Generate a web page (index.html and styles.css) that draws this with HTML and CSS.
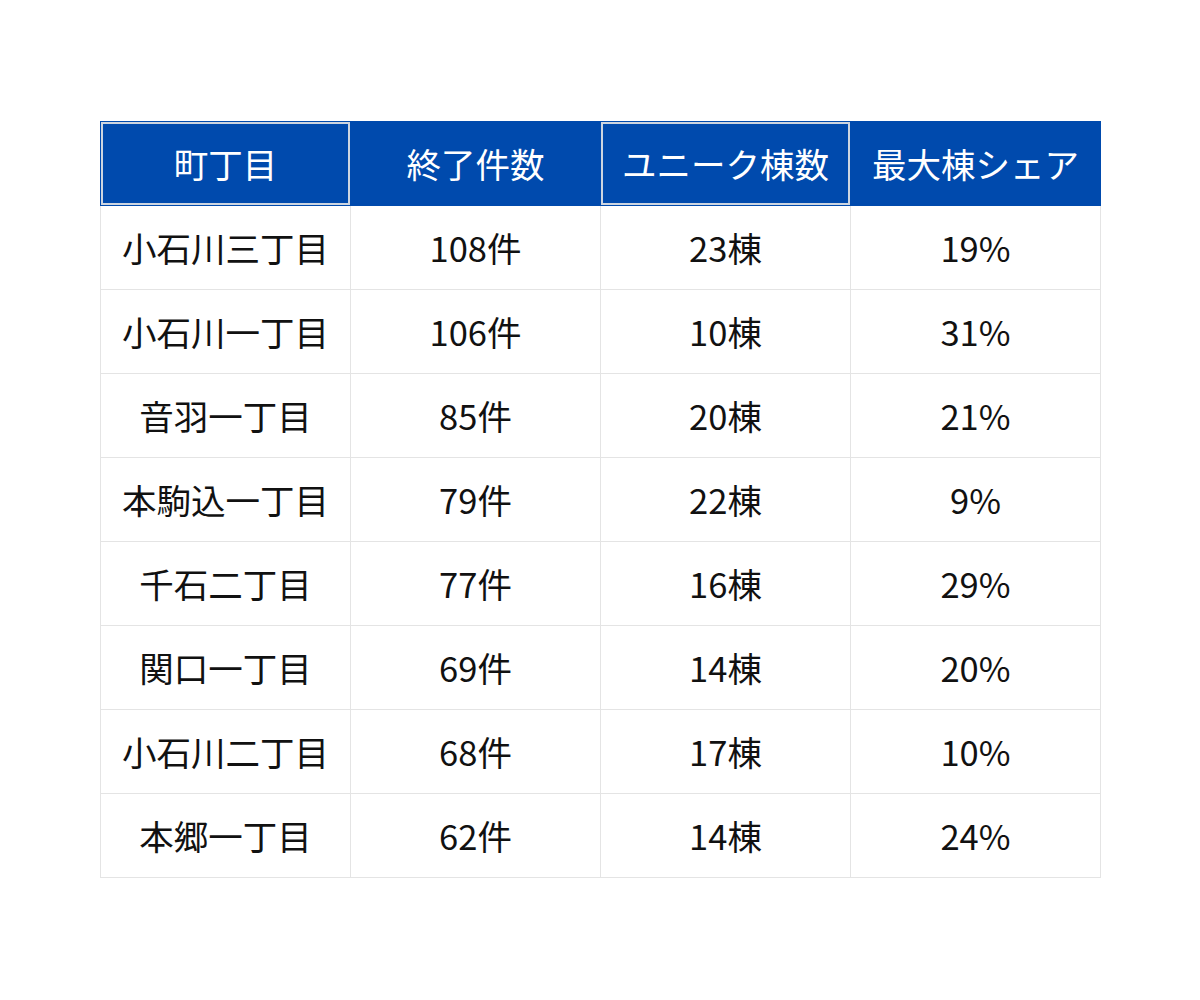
FILE: index.html
```html
<!DOCTYPE html>
<html lang="ja">
<head>
<meta charset="utf-8">
<link rel="stylesheet" href="styles.css">
</head>
<body>
<div class="wrap">
<table class="tbl">
<thead>
<tr><th class="hl">町丁目</th><th>終了件数</th><th class="hl">ユニーク棟数</th><th>最大棟シェア</th></tr>
</thead>
<tbody>
<tr><td>小石川三丁目</td><td>108件</td><td>23棟</td><td>19%</td></tr>
<tr><td>小石川一丁目</td><td>106件</td><td>10棟</td><td>31%</td></tr>
<tr><td>音羽一丁目</td><td>85件</td><td>20棟</td><td>21%</td></tr>
<tr><td>本駒込一丁目</td><td>79件</td><td>22棟</td><td>9%</td></tr>
<tr><td>千石二丁目</td><td>77件</td><td>16棟</td><td>29%</td></tr>
<tr><td>関口一丁目</td><td>69件</td><td>14棟</td><td>20%</td></tr>
<tr><td>小石川二丁目</td><td>68件</td><td>17棟</td><td>10%</td></tr>
<tr><td>本郷一丁目</td><td>62件</td><td>14棟</td><td>24%</td></tr>
</tbody>
</table>
</div>
</body>
</html>
```
FILE: styles.css
```css
html, body { margin: 0; padding: 0; background: #fff; }
body { font-family: "Noto Sans CJK JP", "Noto Sans", sans-serif; }
.wrap { padding: 121px 100px 0 100px; }
.tbl {
  width: 1000px;
  border-collapse: collapse;
  table-layout: fixed;
}
.tbl th, .tbl td {
  width: 250px;
  height: 84px;
  padding: 0;
  box-sizing: border-box;
  text-align: center;
  vertical-align: middle;
  font-size: 34.5px;
  font-weight: 400;
  line-height: 1;
}
.tbl th {
  background: #004aad;
  color: #fff;
  border: 1px solid #004aad;
}
.tbl th.hl { box-shadow: inset 0 0 0 2px #cdd5e0; }
.tbl td {
  color: #111;
  border: 1px solid #e4e4e4;
}
```
